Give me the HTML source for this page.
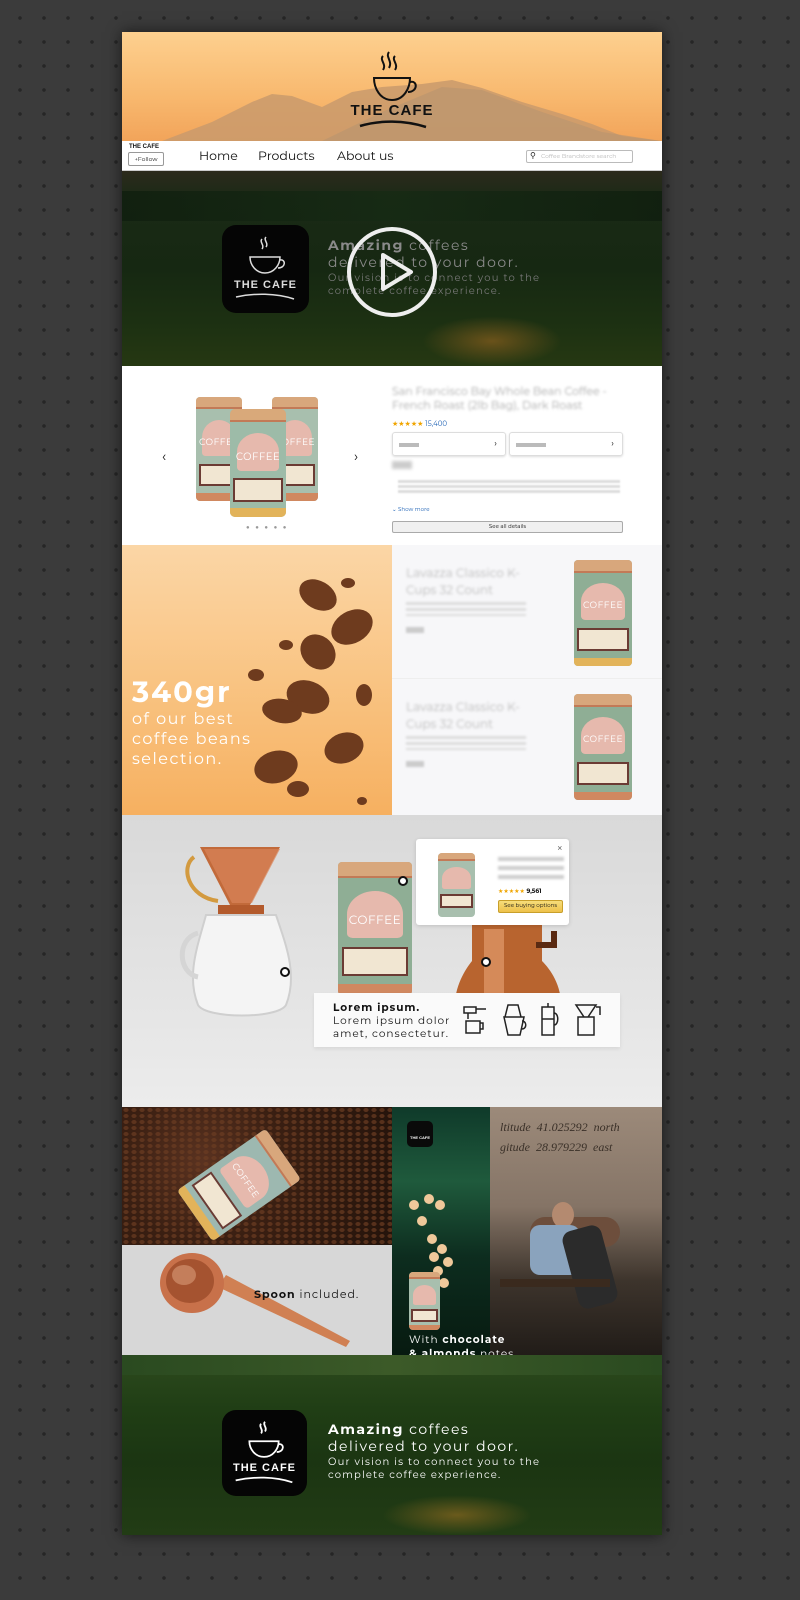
<!DOCTYPE html>
<html><head><meta charset="utf-8">
<style>
*{margin:0;padding:0;box-sizing:border-box}
body{width:800px;height:1600px;background:#3b3b3b;background-image:radial-gradient(circle,#262626 1.6px,transparent 2px);background-size:24px 24px;background-position:8px 6px;font-family:"Montserrat","Liberation Sans",sans-serif;position:relative;overflow:hidden}
.page{position:absolute;left:122px;top:32px;width:540px;height:1503px;box-shadow:0 0 14px rgba(0,0,0,.6);overflow:hidden;background:#fff}
.abs{position:absolute}
.can{position:absolute;border-radius:4px;overflow:hidden;background:#8fae95}
.can .lid{position:absolute;left:0;right:0;top:0;height:12%;background:#d8a77c;border-bottom:2px solid #c27a57}
.can .pk{position:absolute;left:12%;right:12%;top:22%;height:35%;background:#e6b9ad;border-radius:50% 50% 10% 10%}
.can .t{position:absolute;left:0;right:0;top:38%;text-align:center;color:#fff;font-size:9px;letter-spacing:.5px}
.can .lab{position:absolute;left:6%;right:6%;top:64%;height:22%;background:#6b3b34;border:2px solid #6b3b34}
.can .lab i{display:block;width:100%;height:100%;background:#f1e6d2}
.can .bot{position:absolute;left:0;right:0;bottom:0;height:8%;background:#d08860}
</style></head><body>
<div class="page">
<!-- header -->
<div class="abs" style="left:0;top:0;width:540px;height:109px;background:linear-gradient(180deg,#fdd08f 0%,#f8b86e 60%,#f2a45a 100%)">
<svg width="540" height="109" style="position:absolute;left:0;top:0">
<polygon points="40,109 90,90 130,70 150,62 170,64 200,75 230,60 260,55 300,52 330,48 360,56 400,70 440,82 470,92 500,104 540,109" fill="#c99a6c" opacity=".85"/>
<polygon points="200,109 260,80 320,55 360,58 420,80 480,100 540,109" fill="#b89570" opacity=".6"/>
</svg>
<svg width="80" height="60" style="position:absolute;left:230px;top:16px" viewBox="0 0 80 60" fill="none" stroke="#111" stroke-width="2">
<path d="M31 8c-4 4 4 8 0 14M37 4c-4 5 4 9 0 16M43 8c-4 4 4 8 0 14"/>
<path d="M22 30h36c0 10-6 22-18 22S22 40 22 30z"/>
<path d="M58 34c8-2 8 10-2 10"/>
</svg>
<div class="abs" style="left:210px;top:70px;width:120px;text-align:center;font:bold 15px 'Liberation Sans',sans-serif;letter-spacing:1px;color:#111;white-space:nowrap">THE CAFE</div>
<svg width="80" height="12" style="position:absolute;left:232px;top:86px" fill="none" stroke="#111" stroke-width="2.5"><path d="M6 8c20-6 44-6 66 1"/></svg>
</div>
<!-- nav -->
<div class="abs" style="left:0;top:109px;width:540px;height:30px;background:#fff;border-bottom:1px solid #ccc">
<div class="abs" style="left:7px;top:3px;font:bold 6px sans-serif;color:#111">THE CAFE</div>
<div class="abs" style="left:6px;top:11px;width:36px;height:14px;border:1px solid #999;border-radius:2px;font-size:6px;line-height:12px;text-align:center;color:#111">+Follow</div>
<div class="abs" style="left:77px;top:8px;font-size:12.5px;color:#111">Home</div>
<div class="abs" style="left:136px;top:8px;font-size:12.5px;color:#111">Products</div>
<div class="abs" style="left:215px;top:8px;font-size:12.5px;color:#111">About us</div>
<div class="abs" style="left:404px;top:9px;width:107px;height:13px;border:1px solid #bbb;border-radius:2px;font-size:6px;line-height:11px;color:#bbb;padding-left:14px">Coffee Brandstore search<span style="position:absolute;left:3px;top:0;color:#222;font-size:8px">⚲</span></div>
</div>
<!-- hero -->
<div class="abs" style="left:0;top:139px;width:540px;height:195px;background:linear-gradient(180deg,#2c2a1c 0%,#1a2a16 15%,#162812 50%,#1d3112 80%,#263812 100%)">
<div class="abs" style="left:0;top:20px;width:540px;height:30px;background:linear-gradient(90deg,#0f1e0e,#162a14,#0f1e0e);opacity:.8"></div>
<div class="abs" style="left:300px;top:145px;width:140px;height:50px;background:radial-gradient(ellipse,#6a521a 0%,transparent 70%)"></div>
<div class="abs" style="left:100px;top:54px;width:87px;height:88px;background:#050505;border-radius:14px"></div>
<svg width="87" height="88" style="position:absolute;left:100px;top:54px" viewBox="0 0 87 88" fill="none" stroke="#ddd" stroke-width="1.5">
<path d="M40 14c-3 3 3 6 0 10M44 12c-3 3 3 6 0 10"/><path d="M28 32h30c0 8-6 16-15 16s-15-8-15-16z"/><path d="M58 35c6-1 6 8-2 8"/><path d="M14 72c18-4 40-4 58 2"/>
</svg>
<div class="abs" style="left:100px;top:108px;width:87px;text-align:center;font:bold 11px 'Liberation Sans',sans-serif;color:#ddd;letter-spacing:1px">THE CAFE</div>
<div class="abs" style="left:206px;top:66px;color:#8a8a8a;font-size:14px;letter-spacing:1.5px;line-height:17px"><b>Amazing</b> coffees<br>delivered to your door.</div>
<div class="abs" style="left:206px;top:100px;color:#7a7a7a;font-size:10px;letter-spacing:1.2px;line-height:13px">Our vision is to connect you to the<br>complete coffee experience.</div>
<div class="abs" style="left:225px;top:56px;width:90px;height:90px;border:4px solid #eee;border-radius:50%"></div>
<svg width="40" height="40" style="position:absolute;left:256px;top:81px"><polygon points="5,3 33,20 5,37" fill="none" stroke="#eee" stroke-width="4" stroke-linejoin="round"/></svg>
</div>
<!-- product -->
<div class="abs" style="left:0;top:334px;width:540px;height:179px;background:#fff">
<div class="abs" style="left:40px;top:81px;font-size:14px;color:#111">‹</div>
<div class="abs" style="left:232px;top:81px;font-size:14px;color:#111">›</div>
<div class="can" style="left:74px;top:31px;width:46px;height:104px;background:#a8bfae"><div class="lid"></div><div class="pk"></div><div class="t">COFFEE</div><div class="lab"><i></i></div><div class="bot"></div></div>
<div class="can" style="left:150px;top:31px;width:46px;height:104px;background:#a8bfae"><div class="lid"></div><div class="pk"></div><div class="t">COFFEE</div><div class="lab"><i></i></div><div class="bot"></div></div>
<div class="can" style="left:108px;top:43px;width:56px;height:108px;background:#9dbba8;border-radius:5px"><div class="lid" style="background:#d9a97a"></div><div class="pk"></div><div class="t" style="font-size:10px">COFFEE</div><div class="lab"><i></i></div><div class="bot" style="background:#e2b35a"></div></div>
<div class="abs" style="left:124px;top:157px;font-size:6px;color:#999;letter-spacing:2px">● ● ● ● ●</div>
<div class="abs" style="left:270px;top:18px;width:220px;font-size:11px;line-height:14px;color:#aaa;filter:blur(1.2px)">San Francisco Bay Whole Bean Coffee - French Roast (2lb Bag), Dark Roast</div>
<div class="abs" style="left:270px;top:53px;font-size:7px;color:#f0a500">★★★★★ <span style="color:#1a5fb4">15,400</span></div>
<div class="abs" style="left:270px;top:66px;width:114px;height:24px;border:1px solid #ddd;border-radius:3px;box-shadow:0 1px 2px #ddd"><span style="position:absolute;right:8px;top:5px;font-size:9px">›</span><span style="position:absolute;left:6px;top:10px;width:20px;height:4px;background:#bbb"></span></div>
<div class="abs" style="left:387px;top:66px;width:114px;height:24px;border:1px solid #ddd;border-radius:3px;box-shadow:0 1px 2px #ddd"><span style="position:absolute;right:8px;top:5px;font-size:9px">›</span><span style="position:absolute;left:6px;top:10px;width:30px;height:4px;background:#bbb"></span></div>
<div class="abs" style="left:270px;top:95px;width:20px;height:8px;background:#ccc;filter:blur(1.5px)"></div>
<div class="abs" style="left:276px;top:114px;width:222px;height:14px;background:repeating-linear-gradient(180deg,#ddd 0 3px,transparent 3px 5px);filter:blur(.8px)"></div>
<div class="abs" style="left:270px;top:141px;font-size:5.5px;color:#1a5fb4">⌄ Show more</div>
<div class="abs" style="left:270px;top:155px;width:231px;height:12px;border:1px solid #aaa;border-radius:2px;background:#f0f0f0;font-size:5.5px;text-align:center;line-height:10px;color:#111">See all details</div>
</div>
<!-- 340gr -->
<div class="abs" style="left:0;top:513px;width:270px;height:270px;background:linear-gradient(180deg,#fbd6a6 0%,#f9c483 50%,#f6b060 100%)">
<svg width="270" height="270" style="position:absolute;left:0;top:0">
<g fill="#6e3b1e">
<ellipse cx="196" cy="50" rx="20" ry="14" transform="rotate(30 196 50)"/>
<ellipse cx="230" cy="82" rx="22" ry="16" transform="rotate(-30 230 82)"/>
<ellipse cx="196" cy="107" rx="19" ry="16" transform="rotate(45 196 107)"/>
<ellipse cx="186" cy="152" rx="22" ry="16" transform="rotate(20 186 152)"/>
<ellipse cx="160" cy="166" rx="20" ry="12" transform="rotate(10 160 166)"/>
<ellipse cx="222" cy="203" rx="20" ry="15" transform="rotate(-20 222 203)"/>
<ellipse cx="154" cy="222" rx="22" ry="16" transform="rotate(-15 154 222)"/>
<ellipse cx="242" cy="150" rx="8" ry="11"/>
<ellipse cx="226" cy="38" rx="7" ry="5"/>
<ellipse cx="134" cy="130" rx="8" ry="6"/>
<ellipse cx="176" cy="244" rx="11" ry="8"/>
<ellipse cx="164" cy="100" rx="7" ry="5"/>
<ellipse cx="240" cy="256" rx="5" ry="4"/>
</g></svg>
<div class="abs" style="left:10px;top:130px;color:#fff;font-size:29px;font-weight:bold;letter-spacing:2px">340gr</div>
<div class="abs" style="left:10px;top:165px;color:#fff;font-size:16px;line-height:20px;letter-spacing:1.5px">of our best<br>coffee beans<br>selection.</div>
</div>
<div class="abs" style="left:270px;top:513px;width:270px;height:134px;background:#f7f7f9;border-bottom:1px solid #eee">
<div class="abs" style="left:14px;top:20px;width:140px;font-size:12px;line-height:17px;color:#bbb;filter:blur(1.3px)">Lavazza Classico K-Cups 32 Count</div>
<div class="abs" style="left:14px;top:57px;width:120px;height:14px;background:repeating-linear-gradient(180deg,#ddd 0 3px,transparent 3px 6px);filter:blur(1px)"></div>
<div class="abs" style="left:14px;top:82px;width:18px;height:6px;background:#ccc;filter:blur(1px)"></div>
<div class="can" style="left:182px;top:15px;width:58px;height:106px"><div class="lid"></div><div class="pk"></div><div class="t">COFFEE</div><div class="lab"><i></i></div><div class="bot" style="background:#e2b35a"></div></div>
</div>
<div class="abs" style="left:270px;top:647px;width:270px;height:136px;background:#f7f7f9">
<div class="abs" style="left:14px;top:20px;width:140px;font-size:12px;line-height:17px;color:#bbb;filter:blur(1.3px)">Lavazza Classico K-Cups 32 Count</div>
<div class="abs" style="left:14px;top:57px;width:120px;height:14px;background:repeating-linear-gradient(180deg,#ddd 0 3px,transparent 3px 6px);filter:blur(1px)"></div>
<div class="abs" style="left:14px;top:82px;width:18px;height:6px;background:#ccc;filter:blur(1px)"></div>
<div class="can" style="left:182px;top:15px;width:58px;height:106px"><div class="lid"></div><div class="pk"></div><div class="t">COFFEE</div><div class="lab"><i></i></div><div class="bot"></div></div>
</div>
<!-- copper -->
<div class="abs" style="left:0;top:783px;width:540px;height:292px;background:linear-gradient(180deg,#d9d9d9 0%,#e4e4e4 60%,#ececec 100%)">
<svg width="540" height="292" style="position:absolute;left:0;top:0">
<path d="M78 32h80l-30 58h-20z" fill="#c26a3a"/>
<path d="M82 34h76l-28 54h-20z" fill="#d9855a" opacity=".7"/>
<rect x="96" y="90" width="46" height="10" fill="#b35a2c"/>
<path d="M72 42c-14 10-6 40 24 44" fill="none" stroke="#d39a3f" stroke-width="4"/>
<path d="M84 100h70c10 30 22 60 10 90c-8 14-80 14-88 0c-12-30 0-60 8-90z" fill="#f4f4f4" stroke="#cfcfcf" stroke-width="2"/>
<path d="M76 118c-22 6-20 40 0 44" fill="none" stroke="#d5d5d5" stroke-width="5"/>
<path d="M350 110h70v36c10 10 24 30 18 62h-104c-6-30 8-52 16-62z" fill="#b8642f"/>
<path d="M362 114h20v90h-20z" fill="#e7a377" opacity=".6"/>
<path d="M414 130h18v-14" fill="none" stroke="#5a2a12" stroke-width="6"/>
</svg>
<div class="abs" style="left:158px;top:152px;width:10px;height:10px;border:2px solid #111;background:#fff;border-radius:50%"></div>
<div class="can" style="left:216px;top:47px;width:74px;height:133px"><div class="lid"></div><div class="pk"></div><div class="t" style="font-size:12px">COFFEE</div><div class="lab"><i></i></div><div class="bot"></div></div>
<div class="abs" style="left:276px;top:61px;width:10px;height:10px;border:2px solid #111;background:#fff;border-radius:50%"></div>
<div class="abs" style="left:359px;top:142px;width:10px;height:10px;border:2px solid #111;background:#fff;border-radius:50%"></div>
<div class="abs" style="left:294px;top:24px;width:153px;height:86px;background:#fff;border-radius:3px;box-shadow:0 1px 4px rgba(0,0,0,.15)">
<div class="abs" style="right:6px;top:2px;font-size:11px;color:#666">×</div>
<div class="can" style="left:22px;top:14px;width:37px;height:64px;background:#a8bfae"><div class="lid"></div><div class="pk"></div><div class="lab"><i></i></div></div>
<div class="abs" style="left:82px;top:18px;width:66px;height:26px;background:repeating-linear-gradient(180deg,#ccc 0 4px,transparent 4px 9px);filter:blur(1.2px)"></div>
<div class="abs" style="left:82px;top:48px;font-size:6px;color:#f0a500">★★★★★ <span style="color:#111;font-weight:bold">9,561</span></div>
<div class="abs" style="left:82px;top:61px;width:65px;height:13px;background:linear-gradient(#f6dd7a,#eec14b);border:1px solid #c89f2a;border-radius:2px;font-size:5.5px;text-align:center;line-height:11px;color:#111">See buying options</div>
</div>
<div class="abs" style="left:192px;top:178px;width:306px;height:54px;background:#fafafa;box-shadow:0 2px 4px rgba(0,0,0,.08)">
<div class="abs" style="left:19px;top:8px;font-size:10.5px;line-height:13px;letter-spacing:1px;color:#111"><b>Lorem ipsum.</b><br>Lorem ipsum dolor<br>amet, consectetur.</div>
<svg width="150" height="40" style="position:absolute;left:146px;top:8px" fill="none" stroke="#222" stroke-width="1.5">
<path d="M4 6h12v6H4zM16 8h10M8 12v6M6 20h14v12H6zM20 22h3v6h-3"/>
<path d="M48 4h10l3 12h-16zM44 16h20l-4 18H48zM62 20c5 0 5 8 0 8"/>
<path d="M88 2v4M82 6h12v28H82zM94 12c5 0 5 12 0 12M82 18h12"/>
<path d="M116 4h20l-8 12h-4zM118 16h16v18h-16zM136 6h4v8"/>
</svg>
</div>
</div>
<!-- grid -->
<div class="abs" style="left:0;top:1075px;width:270px;height:138px;background:radial-gradient(circle at 30% 40%,#5a3220 0,#3a1f12 40%,#24130b 100%)">
<div class="abs" style="left:0;top:0;width:270px;height:138px;background-image:radial-gradient(ellipse 4px 3px,#6b3c22 60%,transparent 70%);background-size:8px 6px;opacity:.7"></div>
<div class="can" style="left:86px;top:24px;width:62px;height:108px;transform:rotate(55deg);background:#9db8b0"><div class="lid"></div><div class="pk"></div><div class="t">COFFEE</div><div class="lab"><i></i></div><div class="bot" style="background:#e2b35a"></div></div>
</div>
<div class="abs" style="left:0;top:1213px;width:270px;height:110px;background:#d7d7d7">
<svg width="270" height="110" style="position:absolute;left:0;top:0">
<path d="M96 42l128 60l4-6L104 30z" fill="#d08053"/>
<ellipse cx="70" cy="38" rx="32" ry="30" fill="#c8714a"/>
<ellipse cx="68" cy="36" rx="24" ry="22" fill="#a55330"/>
<ellipse cx="62" cy="30" rx="12" ry="10" fill="#d89b78" opacity=".6"/>
</svg>
<div class="abs" style="left:132px;top:42px;font-size:11px;letter-spacing:1px;color:#111"><b>Spoon</b> included.</div>
</div>
<div class="abs" style="left:270px;top:1075px;width:98px;height:248px;background:linear-gradient(180deg,#0f3a2a 0%,#1f5a3c 30%,#0d2d1f 60%,#071a10 100%)">
<div class="abs" style="left:15px;top:14px;width:26px;height:26px;background:#0a0a0a;border-radius:5px"></div>
<div class="abs" style="left:18px;top:28px;font:bold 4px sans-serif;color:#fff">THE CAFE</div>
<svg width="98" height="150" style="position:absolute;left:0;top:60px"><g fill="#f0c89a"><circle cx="22" cy="38" r="5"/><circle cx="37" cy="32" r="5"/><circle cx="48" cy="38" r="5"/><circle cx="30" cy="54" r="5"/><circle cx="40" cy="72" r="5"/><circle cx="50" cy="82" r="5"/><circle cx="42" cy="90" r="5"/><circle cx="56" cy="95" r="5"/><circle cx="46" cy="104" r="5"/><circle cx="52" cy="116" r="5"/></g></svg>
<div class="can" style="left:17px;top:165px;width:31px;height:58px;background:#a8bfae"><div class="lid"></div><div class="pk"></div><div class="lab"><i></i></div><div class="bot"></div></div>
</div>
<div class="abs" style="left:368px;top:1075px;width:172px;height:248px;background:linear-gradient(180deg,#9c8a7a 0%,#857466 40%,#3d342c 70%,#211c18 100%)">
<div class="abs" style="left:10px;top:10px;font:italic 12px 'Liberation Serif',serif;color:#3a3028;line-height:20px;white-space:nowrap">ltitude &nbsp;41.025292 &nbsp;north<br>gitude &nbsp;28.979229 &nbsp;east</div>
<div class="abs" style="left:40px;top:110px;width:90px;height:30px;background:#6d4e3c;border-radius:20px"></div>
<div class="abs" style="left:62px;top:95px;width:22px;height:26px;background:#b48a70;border-radius:50%"></div>
<div class="abs" style="left:40px;top:118px;width:50px;height:50px;background:#8aa3bd;border-radius:10px"></div>
<div class="abs" style="left:80px;top:120px;width:40px;height:80px;background:#2b2b2b;border-radius:10px;transform:rotate(-15deg)"></div>
<div class="abs" style="left:10px;top:172px;width:110px;height:8px;background:#3a2a1e"></div>
</div>
<div class="abs" style="left:287px;top:1301px;font-size:10.5px;line-height:14px;letter-spacing:1px;color:#fff;white-space:nowrap">With <b>chocolate</b><br><b>&amp; almonds</b> notes.</div>
<!-- footer -->
<div class="abs" style="left:0;top:1323px;width:540px;height:180px;background:linear-gradient(180deg,#2d4a1e 0%,#203e15 30%,#1b3512 60%,#223c15 100%)">
<div class="abs" style="left:0;top:0;width:540px;height:20px;background:linear-gradient(90deg,#2a4a20,#3c5a28,#2a4a20)"></div>
<div class="abs" style="left:260px;top:140px;width:150px;height:40px;background:radial-gradient(ellipse,#6a5a1c 0%,transparent 70%)"></div>
<div class="abs" style="left:100px;top:55px;width:85px;height:86px;background:#050505;border-radius:14px"></div>
<svg width="85" height="86" style="position:absolute;left:100px;top:55px" viewBox="0 0 87 88" fill="none" stroke="#fff" stroke-width="1.8">
<path d="M40 14c-3 3 3 6 0 10M44 12c-3 3 3 6 0 10"/><path d="M28 32h30c0 8-6 16-15 16s-15-8-15-16z"/><path d="M58 35c6-1 6 8-2 8"/><path d="M14 72c18-4 40-4 58 2"/>
</svg>
<div class="abs" style="left:100px;top:107px;width:85px;text-align:center;font:bold 11px 'Liberation Sans',sans-serif;color:#fff;letter-spacing:1px">THE CAFE</div>
<div class="abs" style="left:206px;top:66px;color:#fff;font-size:14px;letter-spacing:1.5px;line-height:17px"><b>Amazing</b> coffees<br>delivered to your door.</div>
<div class="abs" style="left:206px;top:100px;color:#fff;font-size:10px;letter-spacing:1.2px;line-height:13px">Our vision is to connect you to the<br>complete coffee experience.</div>
</div>
</div>
</body></html>
